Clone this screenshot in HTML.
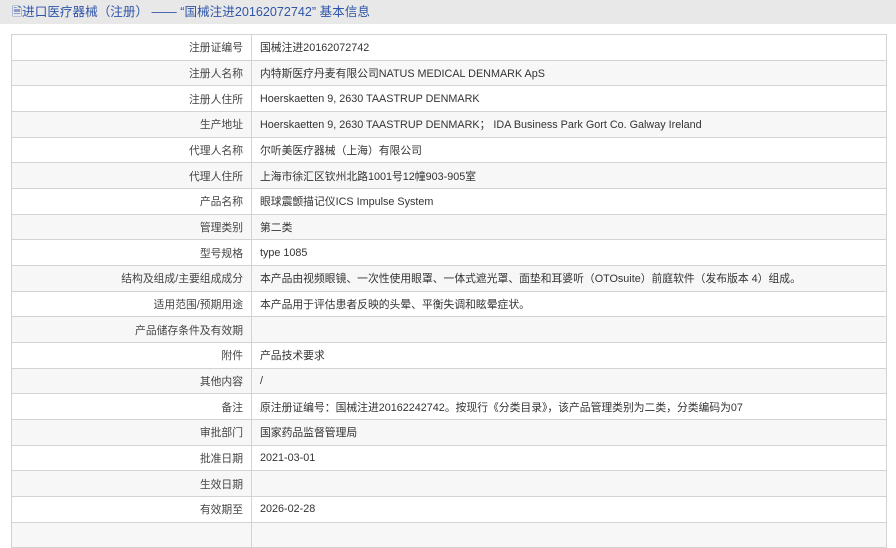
<!DOCTYPE html>
<html><head><meta charset="utf-8"><style>
*{margin:0;padding:0;box-sizing:border-box}
body{width:896px;height:530px;overflow:hidden;background:#fff;font-family:"Liberation Sans","Noto Sans CJK SC",sans-serif;}
.hd{height:24px;background:#e8e8e8;color:#2f55a8;font-size:12.6px;line-height:24px;padding-left:12px;}
table{position:absolute;left:11px;top:34px;width:876px;border-collapse:collapse;font-size:10.8px;color:#333;}
td{border:1px solid #d3d3d3;height:25.68px;padding:0 8px;white-space:nowrap}
td.l{width:240px;text-align:right;color:#444}
tr:nth-child(even) td{background:#f7f7f7}
</style></head><body>
<div class="hd">🗎进口医疗器械（注册） —— “国械注进20162072742” 基本信息</div>
<table>
<tr><td class="l">注册证编号</td><td>国械注进20162072742</td></tr>
<tr><td class="l">注册人名称</td><td>内特斯医疗丹麦有限公司NATUS MEDICAL DENMARK ApS</td></tr>
<tr><td class="l">注册人住所</td><td>Hoerskaetten 9, 2630 TAASTRUP DENMARK</td></tr>
<tr><td class="l">生产地址</td><td>Hoerskaetten 9, 2630 TAASTRUP DENMARK； IDA Business Park Gort Co. Galway Ireland</td></tr>
<tr><td class="l">代理人名称</td><td>尔听美医疗器械（上海）有限公司</td></tr>
<tr><td class="l">代理人住所</td><td>上海市徐汇区钦州北路1001号12幢903-905室</td></tr>
<tr><td class="l">产品名称</td><td>眼球震颤描记仪ICS Impulse System</td></tr>
<tr><td class="l">管理类别</td><td>第二类</td></tr>
<tr><td class="l">型号规格</td><td>type 1085</td></tr>
<tr><td class="l">结构及组成/主要组成成分</td><td>本产品由视频眼镜、一次性使用眼罩、一体式遮光罩、面垫和耳婆听（OTOsuite）前庭软件（发布版本 4）组成。</td></tr>
<tr><td class="l">适用范围/预期用途</td><td>本产品用于评估患者反映的头晕、平衡失调和眩晕症状。</td></tr>
<tr><td class="l">产品储存条件及有效期</td><td></td></tr>
<tr><td class="l">附件</td><td>产品技术要求</td></tr>
<tr><td class="l">其他内容</td><td>/</td></tr>
<tr><td class="l">备注</td><td>原注册证编号：国械注进20162242742。按现行《分类目录》，该产品管理类别为二类，分类编码为07</td></tr>
<tr><td class="l">审批部门</td><td>国家药品监督管理局</td></tr>
<tr><td class="l">批准日期</td><td>2021-03-01</td></tr>
<tr><td class="l">生效日期</td><td></td></tr>
<tr><td class="l">有效期至</td><td>2026-02-28</td></tr>
<tr><td class="l">&nbsp;</td><td></td></tr>
</table>
</body></html>
